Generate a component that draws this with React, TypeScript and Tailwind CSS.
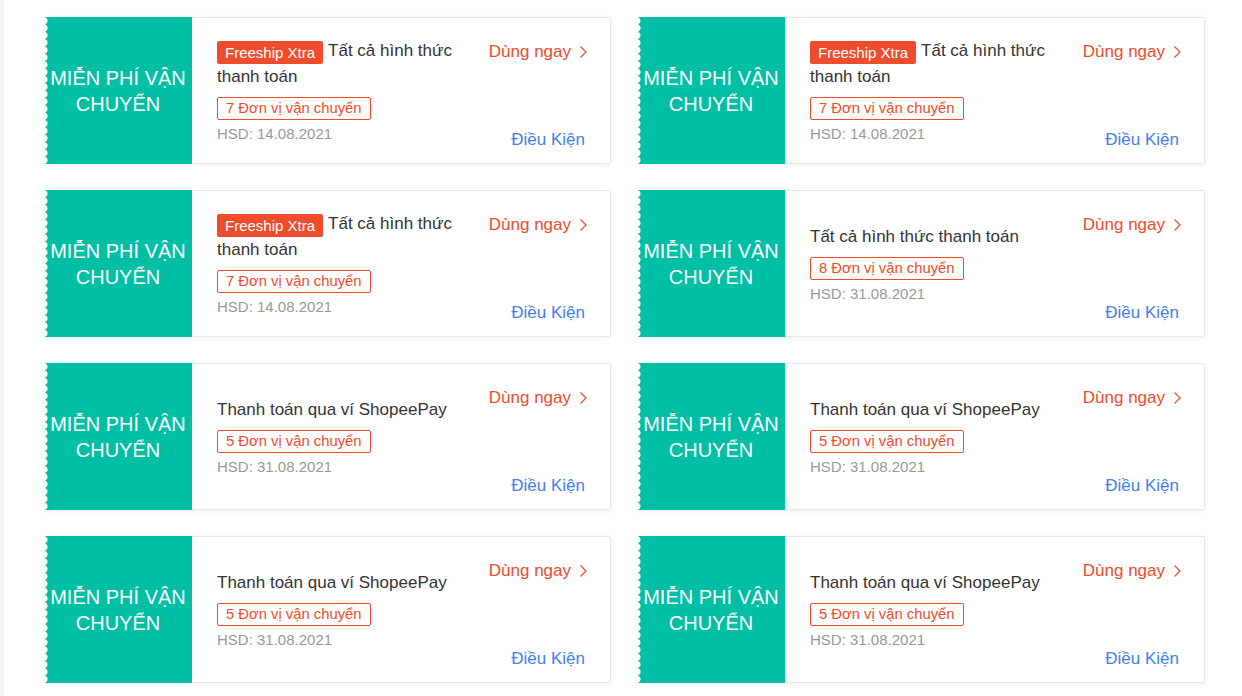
import React from "react";

type Voucher = {
  xtra: boolean;
  title: string;
  carriers: number;
  expiry: string;
};

const vouchers: Voucher[] = [
  { xtra: true, title: "Tất cả hình thức thanh toán", carriers: 7, expiry: "14.08.2021" },
  { xtra: true, title: "Tất cả hình thức thanh toán", carriers: 7, expiry: "14.08.2021" },
  { xtra: true, title: "Tất cả hình thức thanh toán", carriers: 7, expiry: "14.08.2021" },
  { xtra: false, title: "Tất cả hình thức thanh toán", carriers: 8, expiry: "31.08.2021" },
  { xtra: false, title: "Thanh toán qua ví ShopeePay", carriers: 5, expiry: "31.08.2021" },
  { xtra: false, title: "Thanh toán qua ví ShopeePay", carriers: 5, expiry: "31.08.2021" },
  { xtra: false, title: "Thanh toán qua ví ShopeePay", carriers: 5, expiry: "31.08.2021" },
  { xtra: false, title: "Thanh toán qua ví ShopeePay", carriers: 5, expiry: "31.08.2021" },
];

function Chevron() {
  return (
    <svg width="8" height="14" viewBox="0 0 8 14" fill="none" className="shrink-0">
      <polyline points="1.5,1.5 7,7 1.5,12.5" stroke="#ee4d2d" strokeWidth="1.2" />
    </svg>
  );
}

function VoucherCard({ v }: { v: Voucher }) {
  return (
    <div className="flex h-[147px] rounded-[2px] shadow-[0_1px_5px_rgba(0,0,0,0.07)]">
      <div className="relative w-[148px] shrink-0 bg-[#00bfa5] flex items-center justify-center">
        {/* scalloped edge */}
        <div className="absolute left-0 top-0 bottom-0 w-[4px] bg-[radial-gradient(circle_at_0_50%,#fff_3.2px,transparent_3.9px)] bg-[length:4px_7.35px]"></div>
        <p className="text-center text-[20px] leading-[26px] text-white px-1">
          MIỄN PHÍ VẬN
          <br />
          CHUYỂN
        </p>
      </div>
      <div className="flex-1 flex border border-l-0 border-[#e8e8e8] rounded-r-[2px] bg-white pl-[25px] pr-[23px]">
        <div className="flex-1 flex flex-col justify-center">
          <p className="text-[17px] leading-[26px] text-[#333]">
            {v.xtra && (
              <span className="inline-block align-[-2px] bg-[#ee4d2d] text-white text-[15px] leading-[23px] h-[23px] px-[8px] rounded-[2px] mr-[5px]">
                Freeship Xtra
              </span>
            )}
            {v.title}
          </p>
          <div className="mt-[6px]">
            <span className="inline-block border border-[#ee4d2d] rounded-[2px] text-[#ee4d2d] text-[14.8px] leading-[21px] px-[8px]">
              {v.carriers} Đơn vị vận chuyển
            </span>
          </div>
          <p className="mt-[4px] text-[15px] leading-[20px] text-[#999]">HSD: {v.expiry}</p>
        </div>
        <div className="ml-4 flex flex-col items-end justify-between pt-[21px] pb-[10px]">
          <div className="flex items-center gap-[8px] text-[17px] leading-[26px] text-[#ee4d2d]">
            <span>Dùng ngay</span>
            <Chevron />
          </div>
          <div className="text-[17px] leading-[26px] text-[#4080ee] pr-[2px]">Điều Kiện</div>
        </div>
      </div>
    </div>
  );
}

export default function App() {
  return (
    <div className="flex w-full min-h-[696px] bg-white font-['Liberation_Sans',Arial,sans-serif]">
      <div className="w-[4px] shrink-0 bg-[#f5f5f5]"></div>
      <div className="pl-[40px] pt-[17px]">
        <div className="grid grid-cols-[567px_568px] gap-x-[26px] gap-y-[26px]">
          {vouchers.map((v, index) => (
            <VoucherCard key={index} v={v} />
          ))}
        </div>
      </div>
    </div>
  );
}
